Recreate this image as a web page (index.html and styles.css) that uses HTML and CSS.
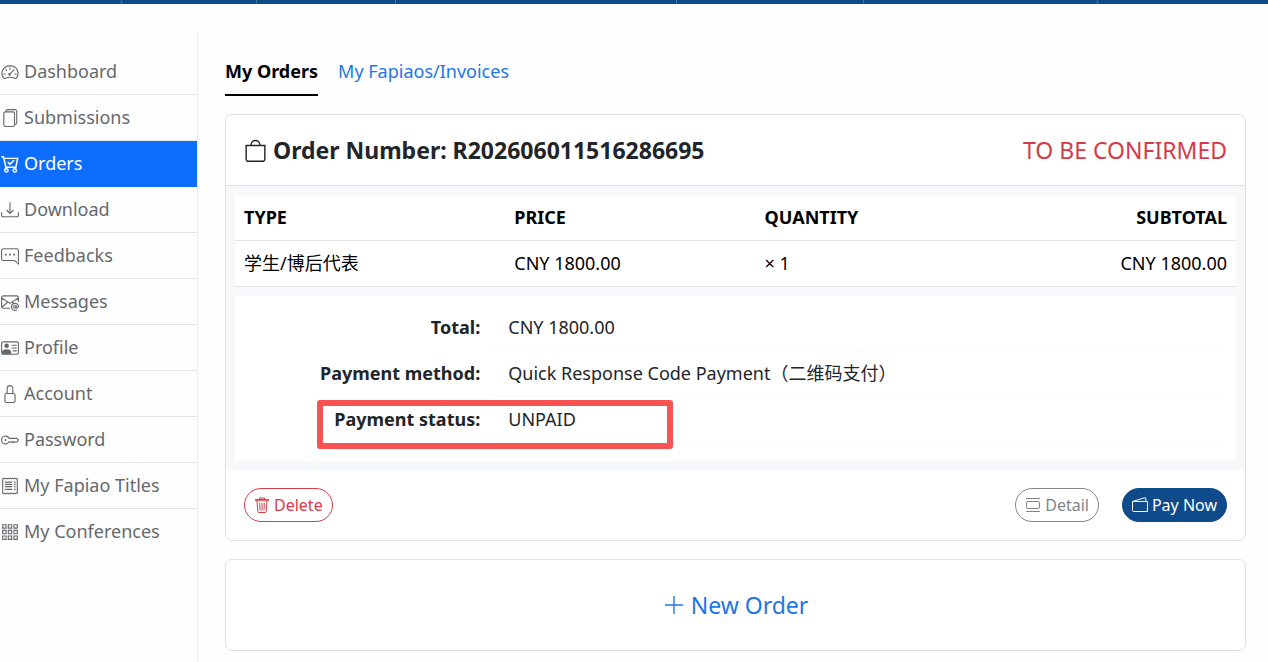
FILE: index.html
```html
<!DOCTYPE html>
<html lang="en">
<head>
<meta charset="utf-8">
<title>My Orders</title>
<link rel="stylesheet" href="styles.css">
</head>
<body>
<header class="topbar"><span></span><span></span><span></span><span></span><span></span><span></span><span></span></header>
<div class="page">
  <nav class="sidebar" aria-label="Account">
    <a class="side-link" href="#"><svg class="icon" viewBox="0 0 16 16"><path d="M2.200 13.200C-.6 9.300 1 2.500 8 2.500s8.600 6.800 5.800 10.700c-.5.600-1.100.6-1.800.3-2.600-1.100-5.400-1.100-8 0-.7.300-1.300.3-1.800-.3zM8 4v2M4 5.700l1.200 1.200M2.200 9.800h1.900M11.900 9.800h1.900M7.200 10.600l4.600-5"/><circle class="solid" cx="7.500" cy="10.200" r="1.100"/></svg>Dashboard</a>
    <a class="side-link" href="#"><svg class="icon" viewBox="0 0 16 16"><rect x="2.500" y="2.500" width="9.500" height="13" rx="1.500"/><path d="M4.500 2.500V2A1.500 1.500 0 0 1 6 .5h6.500A1.500 1.500 0 0 1 14 2v10.200a1.500 1.500 0 0 1-1.500 1.500H12"/></svg>Submissions</a>
    <a class="side-link active" href="#" aria-current="page"><svg class="icon cart" viewBox="0 0 16 16"><path d="M.3 1.500h1.800l2.300 9.300h8.800l1.600-7.800H2.600M4.400 10.800l-.7 1.700M6 6.300l2 2 3.700-3.800"/><circle cx="4.800" cy="13.700" r="1.500"/><circle cx="12.300" cy="13.700" r="1.500"/></svg>Orders</a>
    <a class="side-link" href="#"><svg class="icon" viewBox="0 0 16 16"><path d="M.5 9.900v2.600a1.500 1.500 0 0 0 1.500 1.500h12a1.500 1.500 0 0 0 1.500-1.500V9.900M8 1v10M4.900 8 8 11.100 11.100 8"/></svg>Download</a>
    <a class="side-link" href="#"><svg class="icon" viewBox="0 0 16 16"><path d="M2 1.500h12A1.500 1.500 0 0 1 15.500 3v12l-2.600-2.300a2 2 0 0 0-1.300-.7H2A1.500 1.500 0 0 1 .5 10.500V3A1.500 1.500 0 0 1 2 1.500z"/><path class="solid" d="M3.500 6h1.600v1.600H3.500zM7.200 6h1.600v1.600H7.200zM10.900 6h1.600v1.600h-1.600z"/></svg>Feedbacks</a>
    <a class="side-link" href="#"><svg class="icon" viewBox="0 0 16 16"><path d="M8 13.500H2A1.500 1.500 0 0 1 .5 12V4A1.500 1.500 0 0 1 2 2.500h12A1.500 1.500 0 0 1 15.500 4v4M.5 4.500 8 9l7.500-4.500M.8 12.700l5-4.500M10.200 8.200l1 .6"/><circle cx="12.300" cy="12.300" r="1.200"/><path d="M13.500 11v1.700c0 1.100 2 .8 2-.6 0-4-6.200-3.800-6.200.3 0 2.800 2.700 3.700 4.900 2.700"/></svg>Messages</a>
    <a class="side-link" href="#"><svg class="icon" viewBox="0 0 16 16"><rect x=".5" y="2.500" width="15" height="11" rx="1.500"/><circle class="solid" cx="5" cy="6" r="2"/><path class="solid" d="M1 13.500v-2c0-1.600 1.700-2.500 4-2.500s4 .9 4 2.500v2z"/><path d="M9.500 5.500H14M9.500 8H14M10.500 10.500H14"/></svg>Profile</a>
    <a class="side-link" href="#"><svg class="icon" viewBox="0 0 16 16"><rect x="3.500" y="7.500" width="9" height="8" rx="1.500"/><path d="M5.500 7.500V3a2.500 2.500 0 0 1 5 0v4.500"/></svg>Account</a>
    <a class="side-link" href="#"><svg class="icon" viewBox="0 0 16 16"><path d="M7.100 6.500a3.500 3.500 0 1 0 0 3h.9l1 .7 1-.7 1 .7 1-.7 1 .5h1.200L15.500 8 14 6.500z"/><circle class="solid" cx="4" cy="8" r=".9"/></svg>Password</a>
    <a class="side-link" href="#"><svg class="icon" viewBox="0 0 16 16"><path d="M1.500 1.500v13M14.500 1.500v13"/><path d="M1.500 1.700l1-.7 1 .7 1-.7 1 .7 1-.7 1 .7 1-.7 1 .7 1-.7 1 .7 1-.7 1 .7 1-.7M1.500 14.300l1 .7 1-.7 1 .7 1-.7 1 .7 1-.7 1 .7 1-.7 1 .7 1-.7 1 .7 1-.7 1 .7"/><path d="M3.500 4.500H10M3.500 6.500H10M3.500 8.500H10M3.500 11H10M11.500 4.500h1.500M11.500 6.500h1.500M11.500 8.500h1.500M11.500 11h1.500"/></svg>My Fapiao Titles</a>
    <a class="side-link" href="#"><svg class="icon" viewBox="0 0 16 16"><path d="M1.500 1.500h3v3h-3zM6.500 1.500h3v3h-3zM11.500 1.500h3v3h-3zM1.500 6.500h3v3h-3zM6.500 6.500h3v3h-3zM11.500 6.500h3v3h-3zM1.500 11.500h3v3h-3zM6.500 11.500h3v3h-3zM11.500 11.500h3v3h-3z"/></svg>My Conferences</a>
  </nav>
  <main class="content">
    <nav class="tabs" aria-label="Orders">
      <a class="tab selected" href="#" aria-current="page">My Orders</a>
      <a class="tab" href="#">My Fapiaos/Invoices</a>
    </nav>
    <section class="card">
      <div class="card-head">
        <h1 class="order-title"><svg class="icon" viewBox="0 0 16 16"><path d="M1.500 4.500h13V14a1.500 1.500 0 0 1-1.500 1.500H3A1.500 1.500 0 0 1 1.500 14zM5 4.500V4a3 3 0 0 1 6 0v.5"/></svg>Order Number: R202606011516286695</h1>
        <span class="order-state">TO BE CONFIRMED</span>
      </div>
      <div class="card-body">
        <table class="items">
          <thead><tr><th class="c-type">TYPE</th><th class="c-price">PRICE</th><th class="c-qty">QUANTITY</th><th class="c-sub">SUBTOTAL</th></tr></thead>
          <tbody><tr><td>学生/博后代表</td><td>CNY 1800.00</td><td>× 1</td><td class="c-sub">CNY 1800.00</td></tr></tbody>
        </table>
        <dl class="details">
          <div class="detail-row"><dt>Total:</dt><dd>CNY 1800.00</dd></div>
          <div class="detail-row"><dt>Payment method:</dt><dd>Quick Response Code Payment（二维码支付）</dd></div>
          <div class="detail-row marked"><dt>Payment status:</dt><dd>UNPAID</dd></div>
        </dl>
      </div>
      <div class="card-foot">
        <button class="btn btn-delete" type="button"><svg class="icon" viewBox="0 0 16 16"><path d="M1.500 2.500h13v1.300h-13zM5.500 2.500v-1.500h5v1.500M3 4l.8 10.500a1 1 0 0 0 1 1h6.400a1 1 0 0 0 1-1L13 4M5.700 6l.3 7.500M8 6v7.500M10.300 6l-.3 7.500"/></svg>Delete</button>
        <div class="actions">
          <button class="btn btn-detail" type="button"><svg class="icon" viewBox="0 0 16 16"><path d="M1 1.500h14M1 14.500h14"/><rect x="1.500" y="4.500" width="13" height="7" rx="1.500"/></svg>Detail</button>
          <button class="btn btn-pay" type="button"><svg class="icon" viewBox="0 0 16 16"><path d="M.5 4.500h15v10H1.500a1 1 0 0 1-1-1zM.5 4.500 12.500.8a1 1 0 0 1 1.300 1v2.700"/></svg>Pay Now</button>
        </div>
      </div>
    </section>
    <a class="card new-order" href="#"><svg class="icon" viewBox="0 0 16 16"><path d="M8 1.500v13M1.500 8h13"/></svg>New Order</a>
  </main>
</div>
</body>
</html>
```
FILE: styles.css
```css
*, *::before, *::after { box-sizing: border-box; }
body {
  margin: 0;
  background: #fefefe;
  color: #212529;
  font: 18px/27px "Noto Sans", "Noto Sans CJK SC", sans-serif;
}
a { text-decoration: none; }
.icon {
  width: 18px;
  height: 18px;
  flex: none;
  fill: none;
  stroke: currentColor;
  stroke-width: 1;
}
.icon .solid { fill: currentColor; stroke: none; }
.icon.cart { stroke-width: 1.3; }

.topbar {
  height: 4px;
  display: grid;
  grid-template-columns: 122fr 135fr 139fr 281fr 187fr 234fr 170fr;
  background: #0f4a8a;
}
.topbar span { border-right: 1px solid #4775a6; }
.topbar span:last-child { border-right: 0; }

.page {
  display: flex;
  align-items: stretch;
  padding-top: 26px;
  min-height: calc(100vh - 4px);
}
.sidebar {
  flex: 0 0 198px;
  padding-top: 19px;
  border-right: 1px solid #ebecee;
}
.side-link {
  display: flex;
  align-items: center;
  gap: 5px;
  height: 46px;
  padding-left: 1px;
  color: #66696c;
  border-bottom: 1px solid #e4e5e7;
}
.side-link:last-child { border-bottom-color: transparent; }
.side-link.active {
  background: #0d6efd;
  color: #fff;
  border-color: #0d6efd;
}

.content {
  flex: 1;
  min-width: 0;
  padding: 28px 22px 11px 27px;
  display: flex;
  flex-direction: column;
  gap: 18px;
}
.tabs { display: flex; gap: 20px; }
.tab { padding-bottom: 9px; color: #1f75ea; border-bottom: 2px solid transparent; }
.tab.selected { color: #000; font-weight: 700; border-color: #000; }

.card {
  background: #fff;
  border: 1px solid #dfe0e2;
  border-radius: 7px;
}
.card-head {
  display: flex;
  justify-content: space-between;
  align-items: center;
  min-height: 71px;
  padding: 0 18px;
  border-bottom: 1px solid #dfe0e2;
}
.order-title {
  display: flex;
  align-items: center;
  gap: 6px;
  margin: 0;
  font-size: 23px;
  font-weight: 700;
}
.order-title .icon { width: 23px; height: 23px; }
.order-state { font-size: 23px; color: #d33a4a; }

.card-body {
  display: grid;
  gap: 9px;
  padding: 9px;
  background: #f7f8fa;
}
.items {
  width: 100%;
  table-layout: fixed;
  border-collapse: separate;
  border-spacing: 0;
  background: #fff;
  color: #000;
}
.items th, .items td {
  height: 46px;
  padding: 0 9px;
  text-align: left;
  border-bottom: 1px solid #e3e4e6;
}
.items .c-type { width: 27%; }
.items .c-price { width: 25%; }
.items .c-qty { width: 26%; }
.items .c-sub { text-align: right; }

.details {
  margin: 0;
  padding: 9px 18px 18px;
  background: #fff;
}
.detail-row {
  position: relative;
  display: grid;
  grid-template-columns: 1fr 3fr;
}
.detail-row dt {
  padding: 9px 14px 9px 0;
  text-align: right;
  font-weight: 700;
}
.detail-row dd {
  margin: 0;
  padding: 9px 14px;
  border-bottom: 1px solid #f8f9fa;
}
.marked::after {
  content: "";
  position: absolute;
  top: 3px;
  left: 64px;
  width: 356px;
  height: 49px;
  border: 6px solid #f85252;
  border-radius: 3px;
}

.card-foot {
  display: flex;
  justify-content: space-between;
  padding: 18px;
}
.actions { display: flex; gap: 23px; }
.btn {
  display: inline-flex;
  align-items: center;
  gap: 4px;
  height: 34px;
  padding: 0 9px;
  border: 1px solid currentColor;
  border-radius: 17px;
  background: #fff;
  font: inherit;
  font-size: 16px;
}
.btn .icon { width: 16px; height: 16px; }
.btn-delete { color: #d63a4b; }
.btn-detail { color: #7f858a; }
.btn-pay { background: #0f4a8a; border-color: #0f4a8a; color: #fff; }

.new-order {
  display: flex;
  justify-content: center;
  align-items: center;
  gap: 6px;
  min-height: 92px;
  color: #1f75ea;
  font-size: 23px;
}
.new-order .icon { width: 22px; height: 22px; }
```
